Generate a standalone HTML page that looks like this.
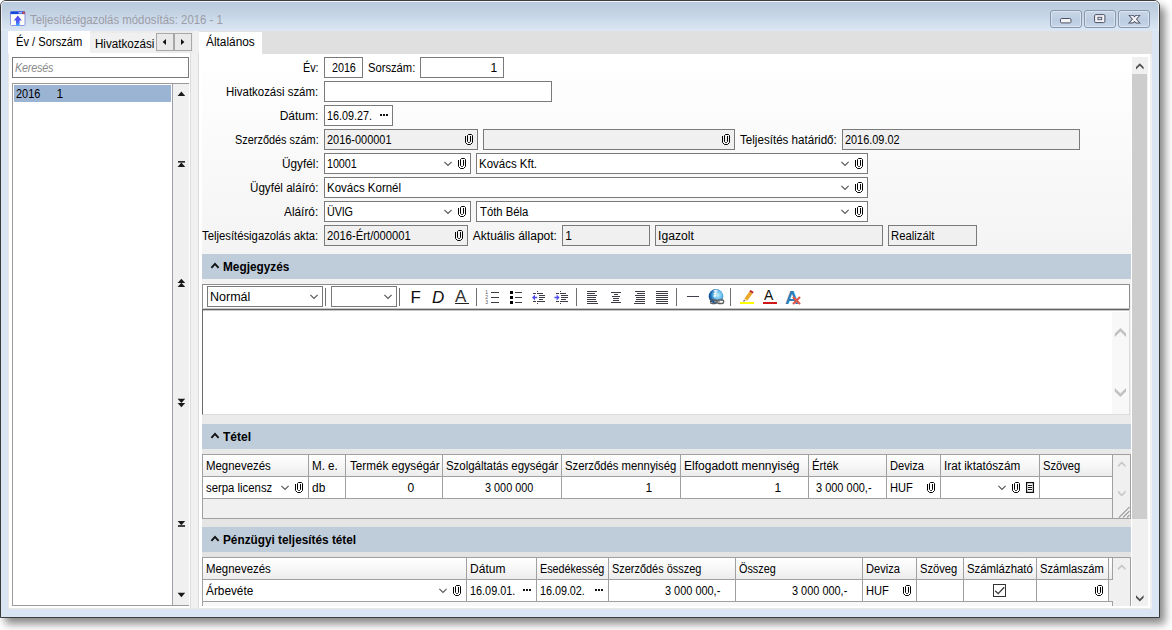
<!DOCTYPE html>
<html lang="hu"><head><meta charset="utf-8"><title>Teljesítésigazolás módosítás: 2016 - 1</title>
<style>
html,body{margin:0;padding:0;background:#fff;}
body{width:1172px;height:630px;overflow:hidden;position:relative;font-family:"Liberation Sans", sans-serif;font-size:12px;color:#000;}
#win{position:absolute;left:0;top:0;width:1160px;height:618px;box-sizing:border-box;border:1px solid #3c3c3c;border-radius:6px 6px 0 0;background:#d9e5f3;box-shadow:5px 6px 8px rgba(0,0,0,0.47);}
#win>*{margin-left:-1px;margin-top:-1px;}
#titlebar{position:absolute;left:1px;top:1px;width:1158px;height:30px;border-radius:5px 5px 0 0;box-shadow:inset 1px 0 0 rgba(255,255,255,0.6),inset -1px 0 0 rgba(255,255,255,0.6);background:linear-gradient(#f2f6fb 0,#f2f6fb 1px,#b9cadc 1px,#c3d3e4 40%,#dce7f4 100%);}
#client{position:absolute;left:8px;top:31px;width:1144px;height:578px;background:#fff;border:1px solid #ebe9e4;box-sizing:border-box;}
#win div{position:absolute;}
.t{position:absolute;white-space:pre;transform-origin:0 0;}
.i{position:absolute;overflow:visible;}
.cap{border:1px solid #8797b2;border-radius:3px;box-sizing:border-box;background:linear-gradient(#c8d6e8,#c0cfe3 45%,#bbcbe0 50%,#c6d5e8);box-shadow:inset 0 0 0 1px rgba(255,255,255,0.4);}
.dots b{position:absolute;top:0;width:2px;height:2px;background:#111;}
.dots b:nth-child(1){left:0}.dots b:nth-child(2){left:3px}.dots b:nth-child(3){left:6px}
</style></head>
<body>
<div id="win">
<div id="titlebar"></div>
<svg class="i" style="left:10px;top:11px" width="16" height="16" viewBox="0 0 16 16">
<rect x="0.5" y="0.5" width="14.5" height="14" rx="1" fill="#fdfdf8" stroke="#8f96e6"/>
<rect x="0.5" y="0.5" width="14.5" height="2.6" fill="#1446d8"/>
<rect x="8.5" y="1" width="3.5" height="1.6" fill="#9db4f0"/>
<rect x="12.6" y="0.8" width="2.2" height="2" fill="#f0522c"/>
<defs><linearGradient id="ag" x1="0" y1="0" x2="0" y2="1"><stop offset="0" stop-color="#5a48e8"/><stop offset="0.6" stop-color="#4f5cf6"/><stop offset="1" stop-color="#46b4ff"/></linearGradient></defs>
<path d="M7.8 4.6 L11.8 9.6 H9.6 V15 H6 V9.6 H3.8 Z" fill="url(#ag)"/>
</svg>
<span class="t" style="left:30.10px;top:12.00px;font-size:12px;line-height:16px;transform:scaleX(0.9476);color:#9c9ca6;">Teljesítésigazolás módosítás: 2016 - 1</span>
<div class="cap" style="left:1050px;top:10px;width:32px;height:18px"><svg class="i" style="left:9px;top:7px" width="12" height="6" viewBox="0 0 12 6"><rect x="0.5" y="0.5" width="10.5" height="4.4" rx="1.2" fill="#f4f4f6" stroke="#4a5064"/></svg></div>
<div class="cap" style="left:1084px;top:10px;width:32px;height:18px"><svg class="i" style="left:9px;top:3px" width="12" height="10" viewBox="0 0 12 10"><rect x="0.6" y="0.6" width="10.3" height="8" rx="1.2" fill="#f4f4f6" stroke="#4a5064"/><rect x="3.9" y="3.3" width="3.8" height="2.4" fill="#dfe6f2" stroke="#4a5064" stroke-width="0.9"/></svg></div>
<div class="cap" style="left:1118px;top:10px;width:32px;height:18px"><svg class="i" style="left:9px;top:3px" width="13" height="10" viewBox="0 0 13 10"><defs><clipPath id="cx1"><rect x="0" y="0.9" width="13" height="8.5"/></clipPath><clipPath id="cx2"><rect x="0" y="1.8" width="13" height="6.7"/></clipPath></defs><path clip-path="url(#cx1)" d="M1.2 -0.8 L11.7 11.1 M11.7 -0.8 L1.2 11.1" stroke="#4a5064" stroke-width="3.9"/><path clip-path="url(#cx2)" d="M1.2 -0.8 L11.7 11.1 M11.7 -0.8 L1.2 11.1" stroke="#f4f4f6" stroke-width="2.2"/></svg></div>
<div id="client">
</div>
<div style="left:8px;top:31px;width:185px;height:22px;background:#ebebeb;"></div>
<div class="tab" style="left:8px;top:31px;width:82px;height:23px;background:#fff;"></div>
<span class="t" style="left:16.10px;top:34.00px;font-size:12px;line-height:16px;transform:scaleX(0.9291);">Év / Sorszám</span>
<div class="tab" style="left:90px;top:33px;width:66px;height:20px;background:#f0f0f0;overflow:hidden"></div>
<span class="t" style="left:95.10px;top:36.00px;font-size:12px;line-height:16px;transform:scaleX(0.9664);width:62.1px;overflow:hidden;">Hivatkozási</span>
<div class="sbtn" style="left:156px;top:33px;width:18px;height:18px;background:#e9e9e9;border:1px solid #a8a8a8;box-sizing:border-box;"><svg class="i" style="left:4px;top:3.5px" width="8" height="8" viewBox="0 0 8 8"><polygon points="5,1 5,7 1.6,4" fill="#111"/></svg></div>
<div class="sbtn" style="left:174px;top:33px;width:18px;height:18px;background:#e9e9e9;border:1px solid #a8a8a8;box-sizing:border-box;"><svg class="i" style="left:4px;top:3.5px" width="8" height="8" viewBox="0 0 8 8"><polygon points="2,1 2,7 5.4,4" fill="#111"/></svg></div>
<div style="left:9px;top:53px;width:181px;height:555px;background:#fff;"></div>
<div class="edit" style="left:12px;top:57px;width:177px;height:21px;background:#fff;border:1px solid #7a7a7a;box-sizing:border-box;"></div>
<span class="t" style="left:15.10px;top:60.00px;font-size:12px;line-height:16px;letter-spacing:-0.211px;transform:scaleX(0.9000);font-style:italic;color:#8c8c8c;">Keresés</span>
<div class="list" style="left:12px;top:83px;width:177px;height:523px;background:#fff;border:1px solid #9a9a9a;border-right:none;box-sizing:border-box;"></div>
<div class="sel" style="left:14px;top:85px;width:157px;height:17px;background:#9cb4d4;"></div>
<span class="t" style="left:15.60px;top:86.00px;font-size:12px;line-height:16px;transform:scaleX(0.9100);">2016</span>
<span class="t" style="left:56.60px;top:86.00px;font-size:12px;line-height:16px;letter-spacing:-0.600px;">1</span>
<div style="left:172px;top:84px;width:17px;height:521px;background:#f0f0f0;border-left:1px solid #a0a0aa;box-sizing:border-box;"></div>
<svg class="i" style="left:0;top:0" width="200" height="610" viewBox="0 0 200 610" fill="#1a1a1a"><polygon points="177.6,95.9 185.2,95.9 181.39999999999998,91.6"/><rect x="178" y="161.1" width="7" height="1.5"/><polygon points="177.6,166.9 185.2,166.9 181.39999999999998,162.5"/><polygon points="177.6,282.9 185.2,282.9 181.39999999999998,278.7"/><polygon points="177.6,287 185.2,287 181.39999999999998,282.8"/><polygon points="177.6,398.8 185.2,398.8 181.39999999999998,403"/><polygon points="177.6,403 185.2,403 181.39999999999998,407.2"/><polygon points="177.6,521 185.2,521 181.39999999999998,525.3"/><rect x="178" y="525.2" width="7" height="1.6"/><polygon points="177.6,592.8 185.2,592.8 181.39999999999998,597.2"/></svg>
<div style="left:190px;top:53px;width:9px;height:555px;background:#f0f0f0;border-left:1px solid #dcdcdc;border-right:1px solid #dcdcdc;box-sizing:border-box;"></div>
<div style="left:193px;top:31px;width:6px;height:22px;background:#f0f0f0;"></div>
<div style="left:199px;top:31px;width:953px;height:23px;background:#e0e0e0;"></div>
<div class="tab" style="left:199px;top:32px;width:63px;height:22px;background:#fff;"></div>
<span class="t" style="left:206.10px;top:34.00px;font-size:12px;line-height:16px;transform:scaleX(0.9884);">Általános</span>
<div class="tabpage" style="left:199px;top:54px;width:951px;height:554px;background:#fff;"></div>
<div class="page" style="left:202px;top:57px;width:929px;height:549px;background:linear-gradient(#ffffff,#e0e0e0);"></div>
<div style="left:1150px;top:54px;width:2px;height:555px;background:#f0efed;"></div>
<div style="left:1132px;top:57px;width:16px;height:549px;background:#f0f0f0;"></div>
<div style="left:1132px;top:74px;width:15px;height:445px;background:#cdcdcd;"></div>
<svg class="i" style="left:1135.7px;top:62.8px" width="8" height="7" viewBox="0 0 8 7"><polygon points="3.8,0.2 7.6,4 7.6,6.4 3.8,2.7 0,6.4 0,4" fill="#505050"/></svg>
<svg class="i" style="left:1135.7px;top:594.6px" width="8" height="7" viewBox="0 0 8 7"><polygon points="3.8,6.5 7.6,2.7 7.6,0.3 3.8,4 0,0.3 0,2.7" fill="#505050"/></svg>
<span class="t" style="left:303.00px;top:60.00px;font-size:12px;line-height:16px;letter-spacing:-0.078px;transform:scaleX(0.9000);">Év:</span>
<div class="edit" style="left:324px;top:57px;width:39px;height:21px;background:#fff;border:1px solid #7a7a7a;box-sizing:border-box;"></div>
<span class="t" style="left:332.10px;top:60.00px;font-size:12px;line-height:16px;letter-spacing:-0.065px;transform:scaleX(0.9000);">2016</span>
<span class="t" style="left:367.60px;top:60.00px;font-size:12px;line-height:16px;transform:scaleX(0.9332);">Sorszám:</span>
<div class="edit" style="left:420px;top:57px;width:84px;height:21px;background:#fff;border:1px solid #7a7a7a;box-sizing:border-box;"></div>
<span class="t" style="left:490.60px;top:60.00px;font-size:12px;line-height:16px;letter-spacing:-0.600px;">1</span>
<span class="t" style="left:226.20px;top:84.00px;font-size:12px;line-height:16px;transform:scaleX(0.9534);">Hivatkozási szám:</span>
<div class="edit" style="left:324px;top:81px;width:228px;height:21px;background:#fff;border:1px solid #7a7a7a;box-sizing:border-box;"></div>
<span class="t" style="left:279.70px;top:108.00px;font-size:12px;line-height:16px;">Dátum:</span>
<div class="edit" style="left:324px;top:105px;width:69px;height:21px;background:#fff;border:1px solid #7a7a7a;box-sizing:border-box;"></div>
<span class="t" style="left:327.10px;top:108.00px;font-size:12px;line-height:16px;transform:scaleX(0.9002);">16.09.27.</span>
<div class="dots" style="left:380px;top:114px"><b></b><b></b><b></b></div>
<span class="t" style="left:234.70px;top:132.00px;font-size:12px;line-height:16px;transform:scaleX(0.9093);">Szerződés szám:</span>
<div class="edit" style="left:324px;top:129px;width:154px;height:21px;background:#f0f0f0;border:1px solid #7a7a7a;box-sizing:border-box;"></div>
<span class="t" style="left:327.10px;top:132.00px;font-size:12px;line-height:16px;transform:scaleX(0.9126);">2016-000001</span>
<svg class="i" style="left:465px;top:134px" width="8" height="11" viewBox="0 0 8 11"><path d="M0.5 2 V8.5 L2.5 10.5 H5.5 L7.5 8.5 V1.5 L6.5 0.5 H3.5 L2.5 1.5 V7.5 L3.5 8.5 H4.5 L5.5 7.5 V2" fill="none" stroke="#000" stroke-width="1"/></svg>
<div class="edit" style="left:483px;top:129px;width:252px;height:21px;background:#f0f0f0;border:1px solid #7a7a7a;box-sizing:border-box;"></div>
<svg class="i" style="left:722px;top:134px" width="8" height="11" viewBox="0 0 8 11"><path d="M0.5 2 V8.5 L2.5 10.5 H5.5 L7.5 8.5 V1.5 L6.5 0.5 H3.5 L2.5 1.5 V7.5 L3.5 8.5 H4.5 L5.5 7.5 V2" fill="none" stroke="#000" stroke-width="1"/></svg>
<span class="t" style="left:740.35px;top:132.00px;font-size:12px;line-height:16px;transform:scaleX(0.9674);">Teljesítés határidő:</span>
<div class="edit" style="left:842px;top:129px;width:238px;height:21px;background:#f0f0f0;border:1px solid #7a7a7a;box-sizing:border-box;"></div>
<span class="t" style="left:844.60px;top:132.00px;font-size:12px;line-height:16px;transform:scaleX(0.9082);">2016.09.02</span>
<span class="t" style="left:281.70px;top:156.00px;font-size:12px;line-height:16px;transform:scaleX(0.9824);">Ügyfél:</span>
<div class="edit" style="left:324px;top:153px;width:147px;height:21px;background:#fff;border:1px solid #7a7a7a;box-sizing:border-box;"></div>
<span class="t" style="left:327.10px;top:156.00px;font-size:12px;line-height:16px;letter-spacing:-0.108px;transform:scaleX(0.9000);">10001</span>
<svg class="i" style="left:444px;top:161px" width="8" height="5" viewBox="0 0 8 5"><path d="M0.4 0.8 L4.0 4.5 L7.6 0.8" fill="none" stroke="#585858" stroke-width="1.15"/></svg>
<svg class="i" style="left:458px;top:158px" width="8" height="11" viewBox="0 0 8 11"><path d="M0.5 2 V8.5 L2.5 10.5 H5.5 L7.5 8.5 V1.5 L6.5 0.5 H3.5 L2.5 1.5 V7.5 L3.5 8.5 H4.5 L5.5 7.5 V2" fill="none" stroke="#000" stroke-width="1"/></svg>
<div class="edit" style="left:476px;top:153px;width:392px;height:21px;background:#fff;border:1px solid #7a7a7a;box-sizing:border-box;"></div>
<span class="t" style="left:479.10px;top:156.00px;font-size:12px;line-height:16px;transform:scaleX(0.9563);">Kovács Kft.</span>
<svg class="i" style="left:841px;top:161px" width="8" height="5" viewBox="0 0 8 5"><path d="M0.4 0.8 L4.0 4.5 L7.6 0.8" fill="none" stroke="#585858" stroke-width="1.15"/></svg>
<svg class="i" style="left:855px;top:158px" width="8" height="11" viewBox="0 0 8 11"><path d="M0.5 2 V8.5 L2.5 10.5 H5.5 L7.5 8.5 V1.5 L6.5 0.5 H3.5 L2.5 1.5 V7.5 L3.5 8.5 H4.5 L5.5 7.5 V2" fill="none" stroke="#000" stroke-width="1"/></svg>
<span class="t" style="left:249.95px;top:180.00px;font-size:12px;line-height:16px;transform:scaleX(0.9681);">Ügyfél aláíró:</span>
<div class="edit" style="left:324px;top:177px;width:544px;height:21px;background:#fff;border:1px solid #7a7a7a;box-sizing:border-box;"></div>
<span class="t" style="left:327.10px;top:180.00px;font-size:12px;line-height:16px;transform:scaleX(0.9570);">Kovács Kornél</span>
<svg class="i" style="left:841px;top:185px" width="8" height="5" viewBox="0 0 8 5"><path d="M0.4 0.8 L4.0 4.5 L7.6 0.8" fill="none" stroke="#585858" stroke-width="1.15"/></svg>
<svg class="i" style="left:855px;top:182px" width="8" height="11" viewBox="0 0 8 11"><path d="M0.5 2 V8.5 L2.5 10.5 H5.5 L7.5 8.5 V1.5 L6.5 0.5 H3.5 L2.5 1.5 V7.5 L3.5 8.5 H4.5 L5.5 7.5 V2" fill="none" stroke="#000" stroke-width="1"/></svg>
<span class="t" style="left:284.20px;top:204.00px;font-size:12px;line-height:16px;transform:scaleX(0.9859);">Aláíró:</span>
<div class="edit" style="left:324px;top:201px;width:147px;height:21px;background:#fff;border:1px solid #7a7a7a;box-sizing:border-box;"></div>
<span class="t" style="left:327.10px;top:204.00px;font-size:12px;line-height:16px;letter-spacing:-0.169px;transform:scaleX(0.9000);">ÜVIG</span>
<svg class="i" style="left:444px;top:209px" width="8" height="5" viewBox="0 0 8 5"><path d="M0.4 0.8 L4.0 4.5 L7.6 0.8" fill="none" stroke="#585858" stroke-width="1.15"/></svg>
<svg class="i" style="left:458px;top:206px" width="8" height="11" viewBox="0 0 8 11"><path d="M0.5 2 V8.5 L2.5 10.5 H5.5 L7.5 8.5 V1.5 L6.5 0.5 H3.5 L2.5 1.5 V7.5 L3.5 8.5 H4.5 L5.5 7.5 V2" fill="none" stroke="#000" stroke-width="1"/></svg>
<div class="edit" style="left:476px;top:201px;width:392px;height:21px;background:#fff;border:1px solid #7a7a7a;box-sizing:border-box;"></div>
<span class="t" style="left:479.60px;top:204.00px;font-size:12px;line-height:16px;transform:scaleX(0.9401);">Tóth Béla</span>
<svg class="i" style="left:841px;top:209px" width="8" height="5" viewBox="0 0 8 5"><path d="M0.4 0.8 L4.0 4.5 L7.6 0.8" fill="none" stroke="#585858" stroke-width="1.15"/></svg>
<svg class="i" style="left:855px;top:206px" width="8" height="11" viewBox="0 0 8 11"><path d="M0.5 2 V8.5 L2.5 10.5 H5.5 L7.5 8.5 V1.5 L6.5 0.5 H3.5 L2.5 1.5 V7.5 L3.5 8.5 H4.5 L5.5 7.5 V2" fill="none" stroke="#000" stroke-width="1"/></svg>
<span class="t" style="left:202.20px;top:228.00px;font-size:12px;line-height:16px;transform:scaleX(0.9416);">Teljesítésigazolás akta:</span>
<div class="edit" style="left:324px;top:225px;width:144px;height:21px;background:#f0f0f0;border:1px solid #7a7a7a;box-sizing:border-box;"></div>
<span class="t" style="left:327.10px;top:228.00px;font-size:12px;line-height:16px;transform:scaleX(0.9373);">2016-Ért/000001</span>
<svg class="i" style="left:455px;top:230px" width="8" height="11" viewBox="0 0 8 11"><path d="M0.5 2 V8.5 L2.5 10.5 H5.5 L7.5 8.5 V1.5 L6.5 0.5 H3.5 L2.5 1.5 V7.5 L3.5 8.5 H4.5 L5.5 7.5 V2" fill="none" stroke="#000" stroke-width="1"/></svg>
<span class="t" style="left:472.85px;top:228.00px;font-size:12px;line-height:16px;">Aktuális állapot:</span>
<div class="edit" style="left:562px;top:225px;width:88px;height:21px;background:#f0f0f0;border:1px solid #7a7a7a;box-sizing:border-box;"></div>
<span class="t" style="left:565.35px;top:228.00px;font-size:12px;line-height:16px;letter-spacing:-0.600px;">1</span>
<div class="edit" style="left:655px;top:225px;width:228px;height:21px;background:#f0f0f0;border:1px solid #7a7a7a;box-sizing:border-box;"></div>
<span class="t" style="left:657.60px;top:228.00px;font-size:12px;line-height:16px;transform:scaleX(1.0125);">Igazolt</span>
<div class="edit" style="left:888px;top:225px;width:89px;height:21px;background:#f0f0f0;border:1px solid #7a7a7a;box-sizing:border-box;"></div>
<span class="t" style="left:890.85px;top:228.00px;font-size:12px;line-height:16px;transform:scaleX(0.9418);">Realizált</span>
<div class="sec" style="left:202px;top:254px;width:929px;height:25px;background:#bfcddb;"></div><svg class="i" style="left:211px;top:262px" width="10" height="8" viewBox="0 0 10 8"><path d="M0.4 5.8 L4 1.9 L7.6 5.8" fill="none" stroke="#111" stroke-width="1.9"/></svg><span class="t" style="left:223.00px;top:259.00px;font-size:12px;line-height:16px;transform:scaleX(0.9858);font-weight:bold;">Megjegyzés</span>
<div class="sec" style="left:202px;top:424px;width:929px;height:25px;background:#bfcddb;"></div><svg class="i" style="left:211px;top:432px" width="10" height="8" viewBox="0 0 10 8"><path d="M0.4 5.8 L4 1.9 L7.6 5.8" fill="none" stroke="#111" stroke-width="1.9"/></svg><span class="t" style="left:223.00px;top:429.00px;font-size:12px;line-height:16px;transform:scaleX(1.0048);font-weight:bold;">Tétel</span>
<div class="sec" style="left:202px;top:527px;width:929px;height:25px;background:#bfcddb;"></div><svg class="i" style="left:211px;top:535px" width="10" height="8" viewBox="0 0 10 8"><path d="M0.4 5.8 L4 1.9 L7.6 5.8" fill="none" stroke="#111" stroke-width="1.9"/></svg><span class="t" style="left:223.00px;top:532.00px;font-size:12px;line-height:16px;transform:scaleX(0.9835);font-weight:bold;">Pénzügyi teljesítés tétel</span>
<div class="tb" style="left:202px;top:284px;width:928px;height:25px;background:#fff;border:1px solid #8e8e8e;border-bottom:1px solid #c4c4c4;box-sizing:border-box;"></div>
<div class="combo" style="left:207px;top:286px;width:116px;height:21px;background:#fff;border:1px solid #7a7a7a;box-sizing:border-box;"></div>
<span class="t" style="left:210.10px;top:289.00px;font-size:12px;line-height:16px;transform:scaleX(1.0421);">Normál</span>
<svg class="i" style="left:310px;top:294px" width="8" height="5" viewBox="0 0 8 5"><path d="M0.4 0.8 L4.0 4.5 L7.6 0.8" fill="none" stroke="#585858" stroke-width="1.15"/></svg>
<div style="left:325px;top:288px;width:1px;height:18px;background:#707070;"></div>
<div class="combo" style="left:331px;top:286px;width:66px;height:21px;background:#fff;border:1px solid #7a7a7a;box-sizing:border-box;"></div>
<svg class="i" style="left:384px;top:294px" width="8" height="5" viewBox="0 0 8 5"><path d="M0.4 0.8 L4.0 4.5 L7.6 0.8" fill="none" stroke="#585858" stroke-width="1.15"/></svg>
<div style="left:399px;top:288px;width:1px;height:18px;background:#707070;"></div>
<div style="left:476px;top:288px;width:1px;height:18px;background:#707070;"></div>
<div style="left:576px;top:288px;width:1px;height:18px;background:#707070;"></div>
<div style="left:676px;top:288px;width:1px;height:18px;background:#707070;"></div>
<div style="left:730px;top:288px;width:1px;height:18px;background:#707070;"></div>
<span class="t" style="left:410.60px;top:287.00px;font-size:17px;line-height:21px;letter-spacing:-0.091px;color:#111;">F</span>
<span class="t" style="left:432.10px;top:287.00px;font-size:17px;line-height:21px;letter-spacing:0.600px;font-style:italic;color:#111;">D</span>
<span class="t" style="left:455.10px;top:286.00px;font-size:17px;line-height:21px;letter-spacing:0.600px;color:#333;">A</span>
<div style="left:455px;top:303px;width:14px;height:1px;background:#222;"></div>
<svg class="i" style="left:491px;top:292px" width="8" height="11" viewBox="0 0 8 11" fill="#3c3c44" shape-rendering="crispEdges"><rect x="0" y="0" width="8" height="1"/><rect x="0" y="5" width="8" height="1"/><rect x="0" y="10" width="8" height="1"/></svg>
<span class="t" style="left:485.20px;top:288.00px;font-size:5px;line-height:8px;letter-spacing:0.600px;color:#555;">1</span>
<span class="t" style="left:485.20px;top:293.00px;font-size:5px;line-height:8px;letter-spacing:0.600px;color:#555;">2</span>
<span class="t" style="left:485.20px;top:298.00px;font-size:5px;line-height:8px;letter-spacing:0.600px;color:#555;">3</span>
<svg class="i" style="left:515px;top:292px" width="7" height="11" viewBox="0 0 7 11" fill="#3c3c44" shape-rendering="crispEdges"><rect x="0" y="0" width="7" height="1"/><rect x="0" y="5" width="7" height="1"/><rect x="0" y="10" width="7" height="1"/></svg>
<svg class="i" style="left:510px;top:291px" width="3" height="13" viewBox="0 0 3 13" fill="#000" shape-rendering="crispEdges"><rect x="0" y="0" width="3" height="1"/><rect x="0" y="1" width="3" height="1"/><rect x="0" y="2" width="3" height="1"/><rect x="0" y="5" width="3" height="1"/><rect x="0" y="6" width="3" height="1"/><rect x="0" y="7" width="3" height="1"/><rect x="0" y="10" width="3" height="1"/><rect x="0" y="11" width="3" height="1"/><rect x="0" y="12" width="3" height="1"/></svg>
<svg class="i" style="left:533px;top:291px" width="12" height="13" viewBox="0 0 12 13" fill="#3c3c44" shape-rendering="crispEdges"><rect x="0" y="2" width="3" height="1"/><rect x="4" y="2" width="6" height="1"/><rect x="6" y="4" width="6" height="1"/><rect x="6" y="6" width="6" height="1"/><rect x="6" y="8" width="4" height="1"/><rect x="0" y="10" width="3" height="1"/><rect x="4" y="10" width="8" height="1"/><rect x="4" y="0" width="1" height="1"/><rect x="4" y="12" width="1" height="1"/></svg>
<svg class="i" style="left:532px;top:294px" width="6" height="7" viewBox="0 0 6 7"><path d="M0 3.5 L3 0.6 V2.7 H5.2 V4.3 H3 V6.4 Z" fill="#5050f0"/></svg>
<svg class="i" style="left:556px;top:291px" width="12" height="13" viewBox="0 0 12 13" fill="#3c3c44" shape-rendering="crispEdges"><rect x="0" y="2" width="3" height="1"/><rect x="4" y="2" width="6" height="1"/><rect x="5" y="4" width="7" height="1"/><rect x="5" y="6" width="7" height="1"/><rect x="5" y="8" width="5" height="1"/><rect x="0" y="10" width="3" height="1"/><rect x="4" y="10" width="8" height="1"/><rect x="4" y="0" width="1" height="1"/><rect x="4" y="12" width="1" height="1"/></svg>
<svg class="i" style="left:554px;top:294px" width="6" height="7" viewBox="0 0 6 7"><path d="M5.6 3.5 L2.6 0.6 V2.7 H0.4 V4.3 H2.6 V6.4 Z" fill="#5050f0"/></svg>
<svg class="i" style="left:587px;top:291px" width="11" height="13" viewBox="0 0 11 13" fill="#3c3c44" shape-rendering="crispEdges"><rect x="0" y="0" width="10" height="1"/><rect x="0" y="2" width="8" height="1"/><rect x="0" y="4" width="10" height="1"/><rect x="0" y="6" width="9" height="1"/><rect x="0" y="8" width="9" height="1"/><rect x="0" y="10" width="10" height="1"/><rect x="0" y="12" width="11" height="1"/></svg>
<svg class="i" style="left:611px;top:292px" width="10" height="11" viewBox="0 0 10 11" fill="#3c3c44" shape-rendering="crispEdges"><rect x="0" y="0" width="10" height="1"/><rect x="3" y="2" width="4" height="1"/><rect x="1" y="4" width="8" height="1"/><rect x="2" y="6" width="6" height="1"/><rect x="2" y="8" width="6" height="1"/><rect x="0" y="10" width="10" height="1"/></svg>
<svg class="i" style="left:634px;top:291px" width="11" height="13" viewBox="0 0 11 13" fill="#3c3c44" shape-rendering="crispEdges"><rect x="1" y="0" width="10" height="1"/><rect x="3" y="2" width="8" height="1"/><rect x="1" y="4" width="10" height="1"/><rect x="2" y="6" width="9" height="1"/><rect x="2" y="8" width="9" height="1"/><rect x="1" y="10" width="10" height="1"/><rect x="0" y="12" width="11" height="1"/></svg>
<svg class="i" style="left:656px;top:291px" width="12" height="13" viewBox="0 0 12 13" fill="#3c3c44" shape-rendering="crispEdges"><rect x="0" y="0" width="12" height="1"/><rect x="0" y="2" width="12" height="1"/><rect x="0" y="4" width="12" height="1"/><rect x="0" y="6" width="12" height="1"/><rect x="0" y="8" width="12" height="1"/><rect x="0" y="10" width="12" height="1"/><rect x="0" y="12" width="12" height="1"/></svg>
<div style="left:687px;top:296px;width:12px;height:1px;background:#404050;"></div>
<svg class="i" style="left:708px;top:288px" width="17" height="18" viewBox="0 0 17 18"><defs><radialGradient id="gg" cx="0.62" cy="0.42" r="0.62"><stop offset="0" stop-color="#c4ecfb"/><stop offset="0.45" stop-color="#6cc0ee"/><stop offset="0.8" stop-color="#1868b0"/><stop offset="1" stop-color="#0a4488"/></radialGradient></defs>
<circle cx="8" cy="8.3" r="7.3" fill="url(#gg)"/>
<path d="M5.2 2.6 L8.6 1.6 L10 3 L8 4.2 L9.4 5.4 L7.6 6.6 L8.8 7.8 L6.6 9.4 L5.2 8 L6.6 6.6 L5.4 5.4 L7 4.2 Z" fill="#ffffff" opacity="0.78"/>
<path d="M2.6 13.4 a1.6 1.6 0 0 1 1.6 -1.4 h3 a1.6 1.6 0 0 1 0 3.6 h-3 a1.6 1.6 0 0 1 -1.6 -1.6z" fill="none" stroke="#5a5a5a" stroke-width="1.3"/>
<path d="M9.4 13.6 a1.6 1.6 0 0 1 1.6 -1.6 h3 a1.7 1.7 0 0 1 0 3.5 h-3 a1.6 1.6 0 0 1 -1.6 -1.7z" fill="#fff" stroke="#5a5a5a" stroke-width="1.3"/>
<path d="M6 13.8 H12" stroke="#888" stroke-width="1.2"/></svg>
<svg class="i" style="left:740px;top:289px" width="15" height="16" viewBox="0 0 15 16"><rect x="0" y="13" width="14" height="2" fill="#ffff00"/><path d="M4.4 9.4 L9.4 2.4 L12.6 4.6 L7.4 11.6 Z" fill="#eaa828"/><path d="M9.4 2.4 L10.5 0.9 L13.7 3.1 L12.6 4.6Z" fill="#b41c24"/><path d="M4.4 9.4 L7.4 11.6 L3.4 12.4 Z" fill="#f0d4a8"/><path d="M3.8 10.9 L5.2 12 L3.3 12.5Z" fill="#222"/></svg>
<span class="t" style="left:764.10px;top:286.00px;font-size:14px;line-height:18px;letter-spacing:0.600px;color:#111;">A</span>
<div style="left:763px;top:302px;width:14px;height:2px;background:#d01818;"></div>
<span class="t" style="left:785.10px;top:286.00px;font-size:19px;line-height:23px;letter-spacing:-0.600px;color:#2e7fb8;font-weight:bold;">A</span>
<svg class="i" style="left:792px;top:296px" width="9" height="9" viewBox="0 0 9 9"><path d="M1 1 L8 8 M8 1 L1 8" stroke="#e0574a" stroke-width="2.2"/></svg>
<div class="ta" style="left:202px;top:309px;width:928px;height:106px;background:#fff;border:1px solid #dcdcdc;border-top-color:#646464;border-left-color:#6a6a6a;box-sizing:border-box;box-shadow:inset 0 1px 0 rgba(0,0,0,0.22);"></div>
<div style="left:1112px;top:312px;width:17px;height:102px;background:#f8f8f8;"></div>
<svg class="i" style="left:1114px;top:327px" width="13" height="11" viewBox="0 0 13 11"><polygon points="6.4,1 12,6.6 12,10 6.4,4.4 0.8,10 0.8,6.6" fill="#c1c1c1"/></svg>
<svg class="i" style="left:1114px;top:387px" width="13" height="11" viewBox="0 0 13 11"><polygon points="6.4,10 12,4.4 12,1 6.4,6.6 0.8,1 0.8,4.4" fill="#c1c1c1"/></svg>
<div class="grid" style="left:202px;top:454px;width:929px;height:65px;background:#f0f0f0;border:1px solid #a0a0a0;box-sizing:border-box;"></div>
<div class="th" style="left:203px;top:455px;width:106px;height:22px;background:linear-gradient(#ffffff,#f7f7f7 50%,#ececec);border-right:1px solid #a0a0a0;border-bottom:1px solid #a0a0a0;box-sizing:border-box;"></div>
<div class="td" style="left:203px;top:477px;width:106px;height:22px;background:#fff;border-right:1px solid #a0a0a0;border-bottom:1px solid #a0a0a0;box-sizing:border-box;"></div>
<div class="th" style="left:309px;top:455px;width:37px;height:22px;background:linear-gradient(#ffffff,#f7f7f7 50%,#ececec);border-right:1px solid #a0a0a0;border-bottom:1px solid #a0a0a0;box-sizing:border-box;"></div>
<div class="td" style="left:309px;top:477px;width:37px;height:22px;background:#fff;border-right:1px solid #a0a0a0;border-bottom:1px solid #a0a0a0;box-sizing:border-box;"></div>
<div class="th" style="left:346px;top:455px;width:97px;height:22px;background:linear-gradient(#ffffff,#f7f7f7 50%,#ececec);border-right:1px solid #a0a0a0;border-bottom:1px solid #a0a0a0;box-sizing:border-box;"></div>
<div class="td" style="left:346px;top:477px;width:97px;height:22px;background:#fff;border-right:1px solid #a0a0a0;border-bottom:1px solid #a0a0a0;box-sizing:border-box;"></div>
<div class="th" style="left:443px;top:455px;width:119px;height:22px;background:linear-gradient(#ffffff,#f7f7f7 50%,#ececec);border-right:1px solid #a0a0a0;border-bottom:1px solid #a0a0a0;box-sizing:border-box;"></div>
<div class="td" style="left:443px;top:477px;width:119px;height:22px;background:#fff;border-right:1px solid #a0a0a0;border-bottom:1px solid #a0a0a0;box-sizing:border-box;"></div>
<div class="th" style="left:562px;top:455px;width:119px;height:22px;background:linear-gradient(#ffffff,#f7f7f7 50%,#ececec);border-right:1px solid #a0a0a0;border-bottom:1px solid #a0a0a0;box-sizing:border-box;"></div>
<div class="td" style="left:562px;top:477px;width:119px;height:22px;background:#fff;border-right:1px solid #a0a0a0;border-bottom:1px solid #a0a0a0;box-sizing:border-box;"></div>
<div class="th" style="left:681px;top:455px;width:128px;height:22px;background:linear-gradient(#ffffff,#f7f7f7 50%,#ececec);border-right:1px solid #a0a0a0;border-bottom:1px solid #a0a0a0;box-sizing:border-box;"></div>
<div class="td" style="left:681px;top:477px;width:128px;height:22px;background:#fff;border-right:1px solid #a0a0a0;border-bottom:1px solid #a0a0a0;box-sizing:border-box;"></div>
<div class="th" style="left:809px;top:455px;width:78px;height:22px;background:linear-gradient(#ffffff,#f7f7f7 50%,#ececec);border-right:1px solid #a0a0a0;border-bottom:1px solid #a0a0a0;box-sizing:border-box;"></div>
<div class="td" style="left:809px;top:477px;width:78px;height:22px;background:#fff;border-right:1px solid #a0a0a0;border-bottom:1px solid #a0a0a0;box-sizing:border-box;"></div>
<div class="th" style="left:887px;top:455px;width:54px;height:22px;background:linear-gradient(#ffffff,#f7f7f7 50%,#ececec);border-right:1px solid #a0a0a0;border-bottom:1px solid #a0a0a0;box-sizing:border-box;"></div>
<div class="td" style="left:887px;top:477px;width:54px;height:22px;background:#fff;border-right:1px solid #a0a0a0;border-bottom:1px solid #a0a0a0;box-sizing:border-box;"></div>
<div class="th" style="left:941px;top:455px;width:99px;height:22px;background:linear-gradient(#ffffff,#f7f7f7 50%,#ececec);border-right:1px solid #a0a0a0;border-bottom:1px solid #a0a0a0;box-sizing:border-box;"></div>
<div class="td" style="left:941px;top:477px;width:99px;height:22px;background:#fff;border-right:1px solid #a0a0a0;border-bottom:1px solid #a0a0a0;box-sizing:border-box;"></div>
<div class="th" style="left:1040px;top:455px;width:73px;height:22px;background:linear-gradient(#ffffff,#f7f7f7 50%,#ececec);border-right:1px solid #a0a0a0;border-bottom:1px solid #a0a0a0;box-sizing:border-box;"></div>
<div class="td" style="left:1040px;top:477px;width:73px;height:22px;background:#fff;border-right:1px solid #a0a0a0;border-bottom:1px solid #a0a0a0;box-sizing:border-box;"></div>
<span class="t" style="left:206.10px;top:458.00px;font-size:12px;line-height:16px;transform:scaleX(0.9523);">Megnevezés</span>
<span class="t" style="left:312.10px;top:458.00px;font-size:12px;line-height:16px;transform:scaleX(0.9673);">M. e.</span>
<span class="t" style="left:349.60px;top:458.00px;font-size:12px;line-height:16px;transform:scaleX(0.9729);">Termék egységár</span>
<span class="t" style="left:446.10px;top:458.00px;font-size:12px;line-height:16px;transform:scaleX(0.9511);">Szolgáltatás egységár</span>
<span class="t" style="left:565.10px;top:458.00px;font-size:12px;line-height:16px;transform:scaleX(0.9427);">Szerződés mennyiség</span>
<span class="t" style="left:684.10px;top:458.00px;font-size:12px;line-height:16px;">Elfogadott mennyiség</span>
<span class="t" style="left:812.10px;top:458.00px;font-size:12px;line-height:16px;transform:scaleX(0.9388);">Érték</span>
<span class="t" style="left:890.10px;top:458.00px;font-size:12px;line-height:16px;transform:scaleX(0.9281);">Deviza</span>
<span class="t" style="left:944.10px;top:458.00px;font-size:12px;line-height:16px;transform:scaleX(0.9778);">Irat iktatószám</span>
<span class="t" style="left:1042.60px;top:458.00px;font-size:12px;line-height:16px;transform:scaleX(0.9318);">Szöveg</span>
<span class="t" style="left:206.10px;top:480.00px;font-size:12px;line-height:16px;transform:scaleX(0.9467);">serpa licensz</span>
<span class="t" style="left:312.10px;top:480.00px;font-size:12px;line-height:16px;transform:scaleX(0.9956);">db</span>
<span class="t" style="left:407.60px;top:480.00px;font-size:12px;line-height:16px;letter-spacing:-0.138px;">0</span>
<span class="t" style="left:484.60px;top:480.00px;font-size:12px;line-height:16px;transform:scaleX(0.9047);">3 000 000</span>
<span class="t" style="left:645.60px;top:480.00px;font-size:12px;line-height:16px;letter-spacing:-0.600px;">1</span>
<span class="t" style="left:774.60px;top:480.00px;font-size:12px;line-height:16px;letter-spacing:-0.600px;">1</span>
<span class="t" style="left:815.60px;top:480.00px;font-size:12px;line-height:16px;transform:scaleX(0.9149);">3 000 000,-</span>
<span class="t" style="left:890.10px;top:480.00px;font-size:12px;line-height:16px;transform:scaleX(0.9241);">HUF</span>
<svg class="i" style="left:281px;top:485px" width="8" height="5" viewBox="0 0 8 5"><path d="M0.4 0.8 L4.0 4.5 L7.6 0.8" fill="none" stroke="#585858" stroke-width="1.15"/></svg>
<svg class="i" style="left:295px;top:482px" width="8" height="11" viewBox="0 0 8 11"><path d="M0.5 2 V8.5 L2.5 10.5 H5.5 L7.5 8.5 V1.5 L6.5 0.5 H3.5 L2.5 1.5 V7.5 L3.5 8.5 H4.5 L5.5 7.5 V2" fill="none" stroke="#000" stroke-width="1"/></svg>
<svg class="i" style="left:927px;top:482px" width="8" height="11" viewBox="0 0 8 11"><path d="M0.5 2 V8.5 L2.5 10.5 H5.5 L7.5 8.5 V1.5 L6.5 0.5 H3.5 L2.5 1.5 V7.5 L3.5 8.5 H4.5 L5.5 7.5 V2" fill="none" stroke="#000" stroke-width="1"/></svg>
<svg class="i" style="left:998px;top:485px" width="8" height="5" viewBox="0 0 8 5"><path d="M0.4 0.8 L4.0 4.5 L7.6 0.8" fill="none" stroke="#585858" stroke-width="1.15"/></svg>
<svg class="i" style="left:1012px;top:482px" width="8" height="11" viewBox="0 0 8 11"><path d="M0.5 2 V8.5 L2.5 10.5 H5.5 L7.5 8.5 V1.5 L6.5 0.5 H3.5 L2.5 1.5 V7.5 L3.5 8.5 H4.5 L5.5 7.5 V2" fill="none" stroke="#000" stroke-width="1"/></svg>
<svg class="i" style="left:1026px;top:482px" width="8" height="11" viewBox="0 0 8 11"><rect x="0.6" y="0.6" width="6.8" height="9.8" fill="#fff" stroke="#111" stroke-width="1.25"/><path d="M2 3.5H6M2 5.5H6M2 7.5H6" stroke="#111" stroke-width="1"/></svg>
<div style="left:1113px;top:455px;width:17px;height:43px;background:#f0f0f0;"></div>
<svg class="i" style="left:1118px;top:460.5px" width="8" height="7" viewBox="0 0 8 7"><polygon points="3.75,0.4 7.5,4.1 7.5,6.3 3.75,2.7 0,6.3 0,4.1" fill="#c6c6c6"/></svg>
<svg class="i" style="left:1118px;top:489.5px" width="8" height="7" viewBox="0 0 8 7"><polygon points="3.75,6.5 7.5,2.8 7.5,0.6 3.75,4.2 0,0.6 0,2.8" fill="#c6c6c6"/></svg>
<div style="left:1112px;top:498px;width:18px;height:20px;background:#f0f0f0;border-left:1px solid #a0a0a0;box-sizing:border-box;"></div>
<svg class="i" style="left:1118px;top:506px" width="12" height="12" viewBox="0 0 12 12"><path d="M11.5 1 L1 11.5 M11.5 5 L5 11.5 M11.5 9 L9 11.5" stroke="#a2a2a2" stroke-width="1.25"/></svg>
<div class="grid" style="left:202px;top:557px;width:929px;height:49px;background:#f0f0f0;border:1px solid #a0a0a0;border-bottom:none;box-sizing:border-box;"></div>
<div class="th" style="left:203px;top:558px;width:264px;height:22px;background:linear-gradient(#ffffff,#f7f7f7 50%,#ececec);border-right:1px solid #a0a0a0;border-bottom:1px solid #a0a0a0;box-sizing:border-box;"></div>
<div class="td" style="left:203px;top:580px;width:264px;height:22px;background:#fff;border-right:1px solid #a0a0a0;border-bottom:1px solid #a0a0a0;box-sizing:border-box;"></div>
<div class="th" style="left:467px;top:558px;width:70px;height:22px;background:linear-gradient(#ffffff,#f7f7f7 50%,#ececec);border-right:1px solid #a0a0a0;border-bottom:1px solid #a0a0a0;box-sizing:border-box;"></div>
<div class="td" style="left:467px;top:580px;width:70px;height:22px;background:#fff;border-right:1px solid #a0a0a0;border-bottom:1px solid #a0a0a0;box-sizing:border-box;"></div>
<div class="th" style="left:537px;top:558px;width:72px;height:22px;background:linear-gradient(#ffffff,#f7f7f7 50%,#ececec);border-right:1px solid #a0a0a0;border-bottom:1px solid #a0a0a0;box-sizing:border-box;"></div>
<div class="td" style="left:537px;top:580px;width:72px;height:22px;background:#fff;border-right:1px solid #a0a0a0;border-bottom:1px solid #a0a0a0;box-sizing:border-box;"></div>
<div class="th" style="left:609px;top:558px;width:127px;height:22px;background:linear-gradient(#ffffff,#f7f7f7 50%,#ececec);border-right:1px solid #a0a0a0;border-bottom:1px solid #a0a0a0;box-sizing:border-box;"></div>
<div class="td" style="left:609px;top:580px;width:127px;height:22px;background:#fff;border-right:1px solid #a0a0a0;border-bottom:1px solid #a0a0a0;box-sizing:border-box;"></div>
<div class="th" style="left:736px;top:558px;width:127px;height:22px;background:linear-gradient(#ffffff,#f7f7f7 50%,#ececec);border-right:1px solid #a0a0a0;border-bottom:1px solid #a0a0a0;box-sizing:border-box;"></div>
<div class="td" style="left:736px;top:580px;width:127px;height:22px;background:#fff;border-right:1px solid #a0a0a0;border-bottom:1px solid #a0a0a0;box-sizing:border-box;"></div>
<div class="th" style="left:863px;top:558px;width:54px;height:22px;background:linear-gradient(#ffffff,#f7f7f7 50%,#ececec);border-right:1px solid #a0a0a0;border-bottom:1px solid #a0a0a0;box-sizing:border-box;"></div>
<div class="td" style="left:863px;top:580px;width:54px;height:22px;background:#fff;border-right:1px solid #a0a0a0;border-bottom:1px solid #a0a0a0;box-sizing:border-box;"></div>
<div class="th" style="left:917px;top:558px;width:47px;height:22px;background:linear-gradient(#ffffff,#f7f7f7 50%,#ececec);border-right:1px solid #a0a0a0;border-bottom:1px solid #a0a0a0;box-sizing:border-box;"></div>
<div class="td" style="left:917px;top:580px;width:47px;height:22px;background:#fff;border-right:1px solid #a0a0a0;border-bottom:1px solid #a0a0a0;box-sizing:border-box;"></div>
<div class="th" style="left:964px;top:558px;width:73px;height:22px;background:linear-gradient(#ffffff,#f7f7f7 50%,#ececec);border-right:1px solid #a0a0a0;border-bottom:1px solid #a0a0a0;box-sizing:border-box;"></div>
<div class="td" style="left:964px;top:580px;width:73px;height:22px;background:#fff;border-right:1px solid #a0a0a0;border-bottom:1px solid #a0a0a0;box-sizing:border-box;"></div>
<div class="th" style="left:1037px;top:558px;width:72px;height:22px;background:linear-gradient(#ffffff,#f7f7f7 50%,#ececec);border-right:1px solid #a0a0a0;border-bottom:1px solid #a0a0a0;box-sizing:border-box;"></div>
<div class="td" style="left:1037px;top:580px;width:72px;height:22px;background:#fff;border-right:1px solid #a0a0a0;border-bottom:1px solid #a0a0a0;box-sizing:border-box;"></div>
<div class="th" style="left:1109px;top:558px;width:4px;height:22px;background:linear-gradient(#ffffff,#f7f7f7 50%,#ececec);border-right:1px solid #a0a0a0;border-bottom:1px solid #a0a0a0;box-sizing:border-box;"></div>
<div style="left:203px;top:602px;width:910px;height:4px;background:#f8f8f8;border-right:1px solid #a0a0a0;box-sizing:border-box;"></div>
<div style="left:1109px;top:601px;width:4px;height:1px;background:#a0a0a0;"></div>
<span class="t" style="left:206.10px;top:561.00px;font-size:12px;line-height:16px;transform:scaleX(0.9523);">Megnevezés</span>
<span class="t" style="left:470.10px;top:561.00px;font-size:12px;line-height:16px;">Dátum</span>
<span class="t" style="left:540.10px;top:561.00px;font-size:12px;line-height:16px;letter-spacing:-0.055px;transform:scaleX(0.9000);">Esedékesség</span>
<span class="t" style="left:611.60px;top:561.00px;font-size:12px;line-height:16px;transform:scaleX(0.9106);">Szerződés összeg</span>
<span class="t" style="left:739.10px;top:561.00px;font-size:12px;line-height:16px;transform:scaleX(0.9045);">Összeg</span>
<span class="t" style="left:866.35px;top:561.00px;font-size:12px;line-height:16px;transform:scaleX(0.9281);">Deviza</span>
<span class="t" style="left:919.60px;top:561.00px;font-size:12px;line-height:16px;transform:scaleX(0.9318);">Szöveg</span>
<span class="t" style="left:966.60px;top:561.00px;font-size:12px;line-height:16px;transform:scaleX(0.9485);">Számlázható</span>
<span class="t" style="left:1039.60px;top:561.00px;font-size:12px;line-height:16px;transform:scaleX(0.9288);">Számlaszám</span>
<span class="t" style="left:206.10px;top:583.00px;font-size:12px;line-height:16px;transform:scaleX(0.9848);">Árbevéte</span>
<span class="t" style="left:470.10px;top:583.00px;font-size:12px;line-height:16px;transform:scaleX(0.9052);">16.09.01.</span>
<span class="t" style="left:540.10px;top:583.00px;font-size:12px;line-height:16px;letter-spacing:-0.030px;transform:scaleX(0.9000);">16.09.02.</span>
<span class="t" style="left:665.10px;top:583.00px;font-size:12px;line-height:16px;transform:scaleX(0.9108);">3 000 000,-</span>
<span class="t" style="left:792.10px;top:583.00px;font-size:12px;line-height:16px;transform:scaleX(0.9108);">3 000 000,-</span>
<span class="t" style="left:866.35px;top:583.00px;font-size:12px;line-height:16px;transform:scaleX(0.9241);">HUF</span>
<div class="dots" style="left:523px;top:589px"><b></b><b></b><b></b></div>
<div class="dots" style="left:595px;top:589px"><b></b><b></b><b></b></div>
<svg class="i" style="left:439px;top:588px" width="8" height="5" viewBox="0 0 8 5"><path d="M0.4 0.8 L4.0 4.5 L7.6 0.8" fill="none" stroke="#585858" stroke-width="1.15"/></svg>
<svg class="i" style="left:453px;top:585px" width="8" height="11" viewBox="0 0 8 11"><path d="M0.5 2 V8.5 L2.5 10.5 H5.5 L7.5 8.5 V1.5 L6.5 0.5 H3.5 L2.5 1.5 V7.5 L3.5 8.5 H4.5 L5.5 7.5 V2" fill="none" stroke="#000" stroke-width="1"/></svg>
<svg class="i" style="left:903px;top:585px" width="8" height="11" viewBox="0 0 8 11"><path d="M0.5 2 V8.5 L2.5 10.5 H5.5 L7.5 8.5 V1.5 L6.5 0.5 H3.5 L2.5 1.5 V7.5 L3.5 8.5 H4.5 L5.5 7.5 V2" fill="none" stroke="#000" stroke-width="1"/></svg>
<svg class="i" style="left:1095px;top:585px" width="8" height="11" viewBox="0 0 8 11"><path d="M0.5 2 V8.5 L2.5 10.5 H5.5 L7.5 8.5 V1.5 L6.5 0.5 H3.5 L2.5 1.5 V7.5 L3.5 8.5 H4.5 L5.5 7.5 V2" fill="none" stroke="#000" stroke-width="1"/></svg>
<svg class="i" style="left:993px;top:584px" width="13" height="13" viewBox="0 0 13 13"><rect x="0.5" y="0.5" width="12" height="12" fill="#fff" stroke="#333"/><path d="M2.2 6.8 L5.2 9.6 L11.2 3.2" fill="none" stroke="#333" stroke-width="1.25"/></svg>
<div style="left:1113px;top:558px;width:17px;height:48px;background:#f0f0f0;"></div>
<svg class="i" style="left:1118px;top:563.7px" width="8" height="7" viewBox="0 0 8 7"><polygon points="3.75,0.4 7.5,4.1 7.5,6.3 3.75,2.7 0,6.3 0,4.1" fill="#c6c6c6"/></svg>
</div>
</body></html>
